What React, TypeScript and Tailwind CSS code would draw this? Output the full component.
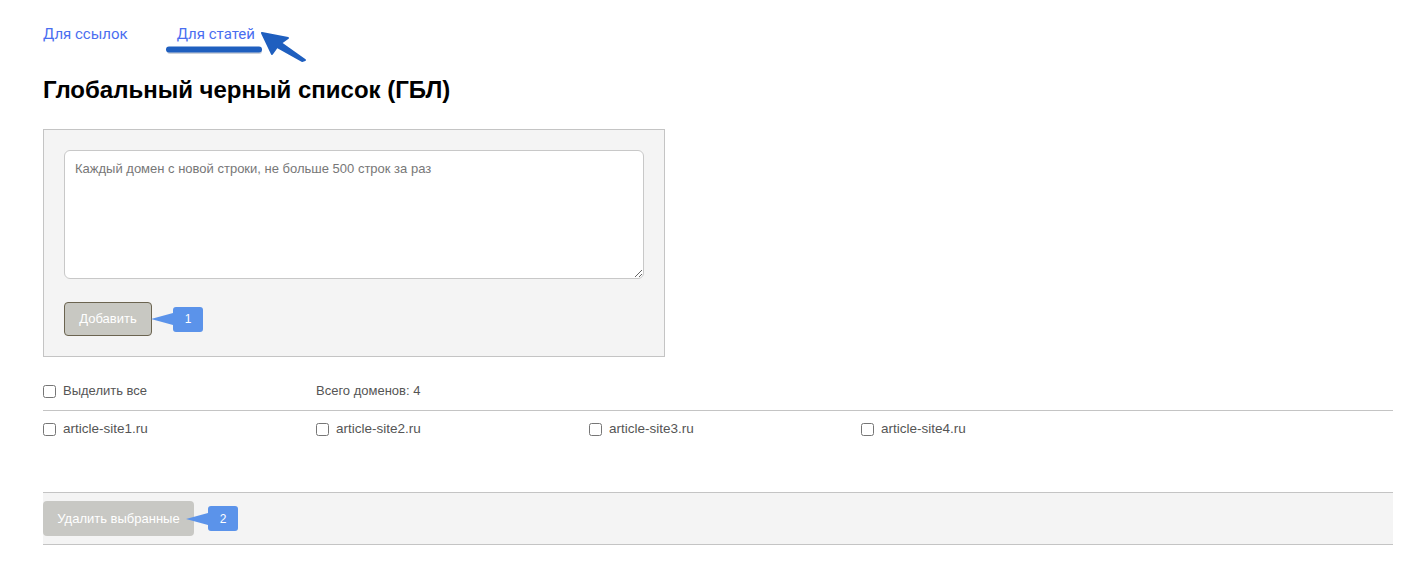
const domains = ["article-site1.ru", "article-site2.ru", "article-site3.ru", "article-site4.ru"];

function Badge({ n, gap }: { n: number; gap: string }) {
    // blue callout with a pointer toward the button on its left
    return (
        <span className={`relative flex h-[25px] w-[30px] items-center justify-center rounded-[3px] bg-[#5b93ea] text-[12px] text-white ${gap}`}>
            <span className="absolute right-full top-1/2 -mt-[6px] h-0 w-0 border-y-[6px] border-r-[22px] border-y-transparent border-r-[#5b93ea]"></span>
            {n}
        </span>
    );
}

export default function App() {
    return (
        <main className="relative min-h-screen bg-white pl-[43px] pr-[27px] pt-[24px] font-['Liberation_Sans',Arial,sans-serif]">

            {/* tabs */}
            <nav className="flex gap-[49px] font-['Roboto',Arial,sans-serif] text-[15px] leading-[20px] text-[#4a6ef0]">
                <a href="#">Для ссылок</a>
                <a href="#">Для статей</a>
            </nav>

            {/* hand-drawn annotation over the active tab */}
            <svg className="pointer-events-none absolute left-0 top-0" width="320" height="70" viewBox="0 0 320 70">
                <line x1="170" y1="51" x2="259" y2="51" stroke="#9aa4b4" strokeWidth="6" strokeLinecap="round" opacity="0.5" />
                <line x1="169" y1="49.5" x2="259" y2="49.5" stroke="#1f5fbf" strokeWidth="6" strokeLinecap="round" />
                <path d="M262 33 L288 38 L281 43 L305 60 L302 61 L277 47 L272 54 Z" fill="#1f5fbf" stroke="#1f5fbf" strokeWidth="2" strokeLinejoin="round" />
            </svg>

            <h1 className="mt-[30px] text-[24px] font-bold leading-[32px] text-black">Глобальный черный список (ГБЛ)</h1>

            {/* add form */}
            <section className="mt-[23px] w-[622px] border border-[#c4c4c4] bg-[#f4f4f4] px-[20px] pb-[20px] pt-[20px]">
                <textarea
                    placeholder="Каждый домен с новой строки, не больше 500 строк за раз"
                    className="block h-[129px] w-full rounded-[6px] border border-[#c8c8c8] bg-white px-[10px] py-[8px] text-[13px] text-[#555] outline-none placeholder:text-[#777]"
                />
                <div className="mt-[23px] flex items-center">
                    <button className="h-[34px] w-[88px] rounded-[4px] border border-[#6b6450] bg-[#c8c8c2] text-[13px] text-white">Добавить</button>
                    <Badge n={1} gap="ml-[21px]" />
                </div>
            </section>

            {/* select all */}
            <div className="mt-[22px] grid h-[24px] grid-cols-[273px_1fr] items-center text-[13px] text-[#555]">
                <label className="flex items-center gap-[7px]">
                    <input type="checkbox" className="m-0 h-[13px] w-[13px]" />
                    Выделить все
                </label>
                <span>Всего доменов: 4</span>
            </div>

            <div className="mt-[7px] border-t border-[#c4c4c4]"></div>

            {/* domain list */}
            <div className="mt-[6px] grid h-[24px] grid-cols-[273px_273px_272px_1fr] items-center text-[13.5px] text-[#555]">
                {domains.map((d) => (
                    <label key={d} className="flex items-center gap-[7px]">
                        <input type="checkbox" className="m-0 h-[13px] w-[13px]" />
                        {d}
                    </label>
                ))}
            </div>

            {/* bulk actions */}
            <div className="mt-[51px] flex items-center border-y border-[#c4c4c4] bg-[#f4f4f4] py-[8px]">
                <button className="h-[35px] w-[151px] rounded-[4px] bg-[#c8c8c4] text-[13px] text-white">Удалить выбранные</button>
                <Badge n={2} gap="ml-[14px]" />
            </div>

        </main>
    );
}
